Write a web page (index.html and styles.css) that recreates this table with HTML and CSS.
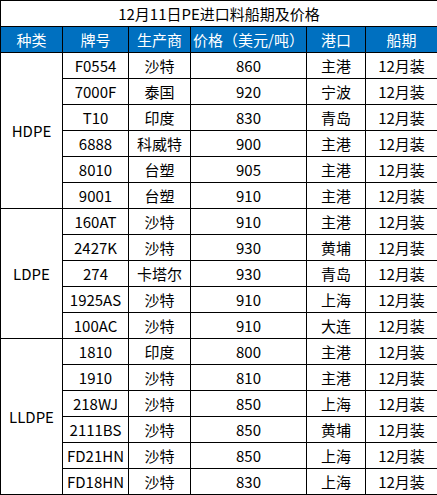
FILE: index.html
```html
<!DOCTYPE html>
<html lang="zh">
<head>
<meta charset="utf-8">
<link rel="stylesheet" href="styles.css">
</head>
<body>
<table class="sheet">
  <colgroup>
    <col class="c1"><col class="c2"><col class="c3"><col class="c4"><col class="c5"><col class="c6">
  </colgroup>
  <tr class="title"><td colspan="6">12月11日PE进口料船期及价格</td></tr>
  <tr class="head"><td>种类</td><td>牌号</td><td>生产商</td><td>价格（美元/吨）</td><td>港口</td><td>船期</td></tr>
  <tr><td rowspan="6">HDPE</td><td>F0554</td><td>沙特</td><td>860</td><td>主港</td><td>12月装</td></tr>
  <tr><td>7000F</td><td>泰国</td><td>920</td><td>宁波</td><td>12月装</td></tr>
  <tr><td>T10</td><td>印度</td><td>830</td><td>青岛</td><td>12月装</td></tr>
  <tr><td>6888</td><td>科威特</td><td>900</td><td>主港</td><td>12月装</td></tr>
  <tr><td>8010</td><td>台塑</td><td>905</td><td>主港</td><td>12月装</td></tr>
  <tr><td>9001</td><td>台塑</td><td>910</td><td>主港</td><td>12月装</td></tr>
  <tr><td rowspan="5">LDPE</td><td>160AT</td><td>沙特</td><td>910</td><td>主港</td><td>12月装</td></tr>
  <tr><td>2427K</td><td>沙特</td><td>930</td><td>黄埔</td><td>12月装</td></tr>
  <tr><td>274</td><td>卡塔尔</td><td>930</td><td>青岛</td><td>12月装</td></tr>
  <tr><td>1925AS</td><td>沙特</td><td>910</td><td>上海</td><td>12月装</td></tr>
  <tr><td>100AC</td><td>沙特</td><td>910</td><td>大连</td><td>12月装</td></tr>
  <tr><td rowspan="6">LLDPE</td><td>1810</td><td>印度</td><td>800</td><td>主港</td><td>12月装</td></tr>
  <tr><td>1910</td><td>沙特</td><td>810</td><td>主港</td><td>12月装</td></tr>
  <tr><td>218WJ</td><td>沙特</td><td>850</td><td>上海</td><td>12月装</td></tr>
  <tr><td>2111BS</td><td>沙特</td><td>850</td><td>黄埔</td><td>12月装</td></tr>
  <tr><td>FD21HN</td><td>沙特</td><td>850</td><td>上海</td><td>12月装</td></tr>
  <tr><td>FD18HN</td><td>沙特</td><td>830</td><td>上海</td><td>12月装</td></tr>
</table>
</body>
</html>
```

FILE: styles.css
```css
html, body {
  margin: 0;
  padding: 0;
  background: #ffffff;
}
.sheet {
  border-collapse: collapse;
  table-layout: fixed;
  width: 437px;
  font-family: "Noto Sans CJK SC", "Noto Sans", sans-serif;
  font-size: 15px;
  color: #000;
}
.c1 { width: 62px; }
.c2 { width: 66px; }
.c3 { width: 62px; }
.c4 { width: 116px; }
.c5 { width: 59px; }
.c6 { width: 72px; }
.sheet td {
  border: 1px solid #000;
  height: 25px;
  padding: 0;
  text-align: center;
  vertical-align: middle;
  line-height: 25px;
  white-space: nowrap;
  overflow: hidden;
}
.head td {
  background: #0070c0;
  color: #fff;
}
```
